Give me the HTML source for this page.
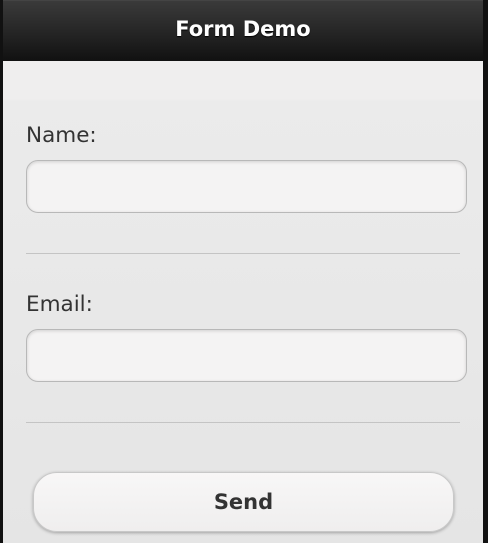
<!DOCTYPE html>
<html><head><style>
html,body{margin:0;padding:0;width:488px;height:543px;overflow:hidden;background:#111;font-family:"DejaVu Sans","Liberation Sans",sans-serif;}
.hdr{position:absolute;left:3px;top:0;width:480px;height:61px;background:linear-gradient(#3a3a3a,#222 60%,#111);border-top:1px solid #444;box-sizing:border-box;}
.hdr div{color:#fff;font-weight:bold;font-size:21px;text-align:center;line-height:56px;text-shadow:0 1px 1px #000;}
.c{position:absolute;left:3px;top:61px;width:480px;height:482px;background:linear-gradient(#efeeee 0,#efeeee 38px,#ebebeb 40px,#e5e5e5 100%);}
.lbl{position:absolute;left:23px;font-size:21.5px;color:#333;}
.in{position:absolute;left:23px;width:441px;height:53px;box-sizing:border-box;border:1px solid #b8b8b8;border-radius:12px;background:#f4f3f3;box-shadow:inset 0 1px 3px rgba(0,0,0,.15);}
.hr{position:absolute;left:23px;width:434px;height:1px;background:#c4c4c4;}
.btn{position:absolute;left:30px;top:411px;width:421px;height:60px;box-sizing:border-box;border:1px solid #c8c8c8;border-radius:24px;background:linear-gradient(#f8f7f7,#efeeee);box-shadow:0 1px 3px rgba(0,0,0,.3);text-align:center;line-height:58px;font-weight:bold;font-size:21px;color:#333;}
</style></head><body>
<div class="hdr"><div>Form Demo</div></div>
<div class="c">
<div class="lbl" style="top:62px">Name:</div>
<div class="in" style="top:99px"></div>
<div class="hr" style="top:192px"></div>
<div class="lbl" style="top:231px">Email:</div>
<div class="in" style="top:268px"></div>
<div class="hr" style="top:361px"></div>
<div class="btn">Send</div>
</div>
</body></html>
